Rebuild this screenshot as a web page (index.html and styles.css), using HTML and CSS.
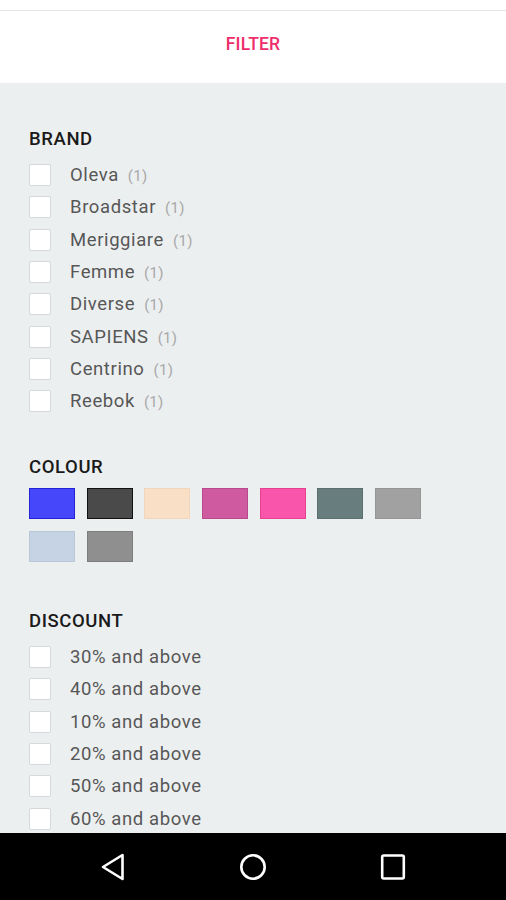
FILE: index.html
```html
<!DOCTYPE html>
<html>
<head>
<meta charset="utf-8">
<link rel="stylesheet" href="styles.css">
</head>
<body>
<div class="screen">
  <div class="topstrip"></div>
  <header class="header"><span class="title">FILTER</span></header>
  <main class="content">
    <section class="section">
      <h2 class="heading">BRAND</h2>
      <ul class="list">
        <li class="row"><span class="box"></span><span class="label">Oleva</span><span class="count">(1)</span></li>
        <li class="row"><span class="box"></span><span class="label">Broadstar</span><span class="count">(1)</span></li>
        <li class="row"><span class="box"></span><span class="label">Meriggiare</span><span class="count">(1)</span></li>
        <li class="row"><span class="box"></span><span class="label">Femme</span><span class="count">(1)</span></li>
        <li class="row"><span class="box"></span><span class="label">Diverse</span><span class="count">(1)</span></li>
        <li class="row"><span class="box"></span><span class="label">SAPIENS</span><span class="count">(1)</span></li>
        <li class="row"><span class="box"></span><span class="label">Centrino</span><span class="count">(1)</span></li>
        <li class="row"><span class="box"></span><span class="label">Reebok</span><span class="count">(1)</span></li>
      </ul>
    </section>
    <section class="section colour">
      <h2 class="heading">COLOUR</h2>
      <div class="swatches">
        <span class="sw sw-blue"></span>
        <span class="sw sw-dark"></span>
        <span class="sw sw-peach"></span>
        <span class="sw sw-orchid"></span>
        <span class="sw sw-pink"></span>
        <span class="sw sw-slate"></span>
        <span class="sw sw-silver"></span>
        <span class="sw sw-lightblue"></span>
        <span class="sw sw-gray"></span>
      </div>
    </section>
    <section class="section discount">
      <h2 class="heading">DISCOUNT</h2>
      <ul class="list">
        <li class="row"><span class="box"></span><span class="label">30% and above</span></li>
        <li class="row"><span class="box"></span><span class="label">40% and above</span></li>
        <li class="row"><span class="box"></span><span class="label">10% and above</span></li>
        <li class="row"><span class="box"></span><span class="label">20% and above</span></li>
        <li class="row"><span class="box"></span><span class="label">50% and above</span></li>
        <li class="row"><span class="box"></span><span class="label">60% and above</span></li>
      </ul>
    </section>
  </main>
  <nav class="navbar">
    <svg class="nav-icon" width="30" height="30" viewBox="0 0 30 30"><path d="M24.5 3 L24.5 27 L5 15 Z" fill="none" stroke="#fff" stroke-width="2.6" stroke-linejoin="round"/></svg>
    <svg class="nav-icon" width="30" height="30" viewBox="0 0 30 30"><circle cx="15" cy="15" r="11.7" fill="none" stroke="#fff" stroke-width="2.6"/></svg>
    <svg class="nav-icon" width="30" height="30" viewBox="0 0 30 30"><rect x="4.2" y="3.5" width="21.6" height="23" rx="1.5" fill="none" stroke="#fff" stroke-width="2.6"/></svg>
  </nav>
</div>
</body>
</html>
```
FILE: styles.css
```css
* { box-sizing: border-box; }
html, body { margin: 0; padding: 0; }
body {
  font-family: Roboto, "Noto Sans", "Liberation Sans", sans-serif;
  background: #eceff0;
}
.screen {
  width: 506px;
  height: 900px;
  display: flex;
  flex-direction: column;
  overflow: hidden;
  background: #eceff0;
}
.topstrip {
  height: 11px;
  background: #fff;
  border-bottom: 1px solid #e2e4e6;
  box-shadow: 0 1px 1px rgba(0,0,0,0.03);
  flex: none;
}
.header {
  height: 72px;
  background: #fff;
  flex: none;
  display: flex;
  align-items: center;
  justify-content: center;
  padding-bottom: 6px;
}
.title {
  color: #ee2d6a;
  font-size: 17.5px;
  font-weight: 500;
  letter-spacing: 0.2px;
}
.content {
  flex: 1;
  overflow: hidden;
  padding: 46px 29px 0;
}
.section { margin: 0; }
.heading {
  margin: 0;
  font-size: 18.5px;
  font-weight: 500;
  line-height: 20px;
  color: #1a1a1a;
  letter-spacing: 0.6px;
}
.list {
  list-style: none;
  margin: 10px 0 0;
  padding: 0;
}
.row {
  height: 32.3px;
  display: flex;
  align-items: center;
}
.box {
  width: 22px;
  height: 22px;
  background: #fff;
  border: 1px solid #d6d9db;
  border-radius: 2px;
  flex: none;
  margin-right: 19px;
}
.label {
  font-size: 18.5px;
  color: #575757;
  letter-spacing: 0.6px;
}
.count {
  font-size: 15px;
  color: #a8a8a8;
  margin-left: 9px;
  padding-top: 2px;
  letter-spacing: 0.3px;
}
.colour { margin-top: 40px; }
.swatches {
  margin-top: 11px;
  display: grid;
  grid-template-columns: repeat(7, 46px);
  column-gap: 11.7px;
  row-gap: 12px;
}
.sw {
  height: 31px;
  border: 1px solid rgba(0,0,0,0.08);
}
.sw-blue { background: #4646fb; border-color: #2222d8; }
.sw-dark { background: #4a4a4a; border-color: #111; }
.sw-peach { background: #f9dfc6; border-color: #f2d6bc; }
.sw-orchid { background: #cf5aa0; border-color: #b84a8b; }
.sw-pink { background: #f955aa; border-color: #e6408f; }
.sw-slate { background: #687d7d; border-color: #5c6f6f; }
.sw-silver { background: #a1a1a1; border-color: #959595; }
.sw-lightblue { background: #c5d3e4; border-color: #b9c6d7; }
.sw-gray { background: #8f8f8f; border-color: #7d7d7d; }
.discount { margin-top: 49px; }
.discount .list { margin-top: 9.6px; }
.navbar {
  height: 67px;
  flex: none;
  background: #000;
  display: grid;
  grid-template-columns: repeat(3, 140px);
  padding: 0 43px;
  align-items: center;
  justify-items: center;
}
.nav-icon { display: block; }
```
